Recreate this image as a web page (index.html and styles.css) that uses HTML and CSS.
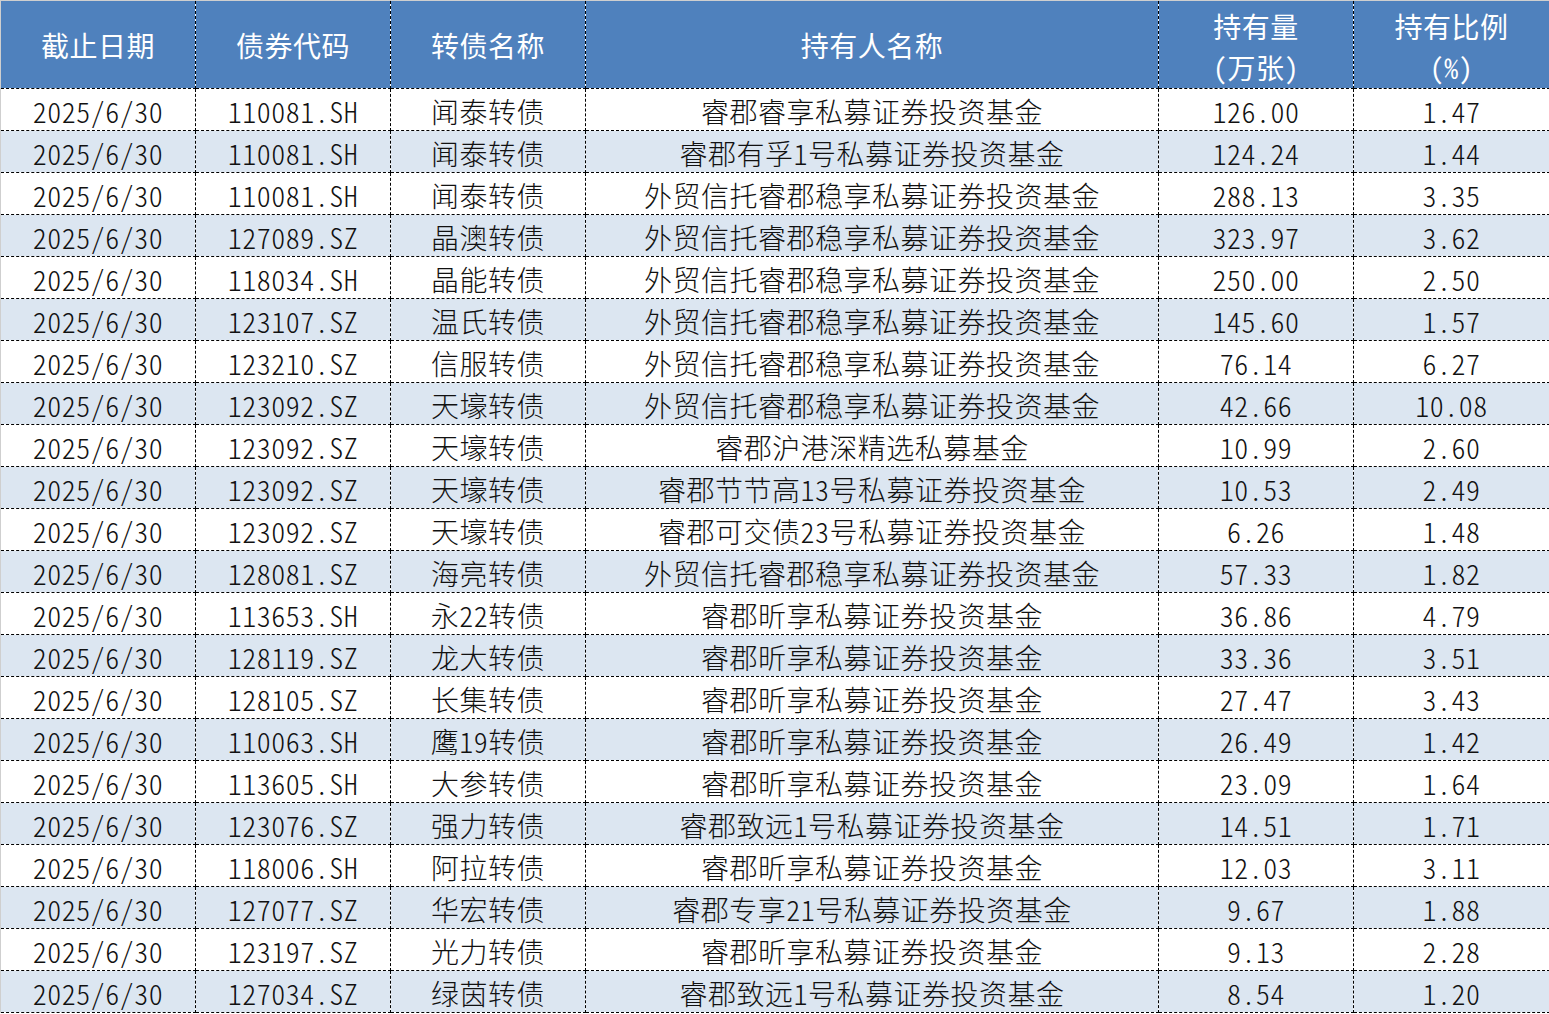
FILE: index.html
```html
<!DOCTYPE html>
<html lang="zh-CN">
<head>
<meta charset="utf-8">
<title>可转债持有人</title>
<link rel="stylesheet" href="styles.css">
</head>
<body>
<table class="sheet">
  <colgroup>
    <col class="c-date"><col class="c-code"><col class="c-name"><col class="c-holder"><col class="c-qty"><col class="c-pct">
  </colgroup>
  <thead>
    <tr class="head">
      <th>截止日期</th>
      <th>债券代码</th>
      <th>转债名称</th>
      <th>持有人名称</th>
      <th class="stack"><span class="line">持有量</span><span class="line">（万张）</span></th>
      <th class="stack"><span class="line">持有比例</span><span class="line">(%)</span></th>
    </tr>
  </thead>
  <tbody>
    <tr><td>2025/6/30</td><td>110081.SH</td><td>闻泰转债</td><td>睿郡睿享私募证券投资基金</td><td>126.00</td><td>1.47</td></tr>
    <tr class="alt"><td>2025/6/30</td><td>110081.SH</td><td>闻泰转债</td><td>睿郡有孚1号私募证券投资基金</td><td>124.24</td><td>1.44</td></tr>
    <tr><td>2025/6/30</td><td>110081.SH</td><td>闻泰转债</td><td>外贸信托睿郡稳享私募证券投资基金</td><td>288.13</td><td>3.35</td></tr>
    <tr class="alt"><td>2025/6/30</td><td>127089.SZ</td><td>晶澳转债</td><td>外贸信托睿郡稳享私募证券投资基金</td><td>323.97</td><td>3.62</td></tr>
    <tr><td>2025/6/30</td><td>118034.SH</td><td>晶能转债</td><td>外贸信托睿郡稳享私募证券投资基金</td><td>250.00</td><td>2.50</td></tr>
    <tr class="alt"><td>2025/6/30</td><td>123107.SZ</td><td>温氏转债</td><td>外贸信托睿郡稳享私募证券投资基金</td><td>145.60</td><td>1.57</td></tr>
    <tr><td>2025/6/30</td><td>123210.SZ</td><td>信服转债</td><td>外贸信托睿郡稳享私募证券投资基金</td><td>76.14</td><td>6.27</td></tr>
    <tr class="alt"><td>2025/6/30</td><td>123092.SZ</td><td>天壕转债</td><td>外贸信托睿郡稳享私募证券投资基金</td><td>42.66</td><td>10.08</td></tr>
    <tr><td>2025/6/30</td><td>123092.SZ</td><td>天壕转债</td><td>睿郡沪港深精选私募基金</td><td>10.99</td><td>2.60</td></tr>
    <tr class="alt"><td>2025/6/30</td><td>123092.SZ</td><td>天壕转债</td><td>睿郡节节高13号私募证券投资基金</td><td>10.53</td><td>2.49</td></tr>
    <tr><td>2025/6/30</td><td>123092.SZ</td><td>天壕转债</td><td>睿郡可交债23号私募证券投资基金</td><td>6.26</td><td>1.48</td></tr>
    <tr class="alt"><td>2025/6/30</td><td>128081.SZ</td><td>海亮转债</td><td>外贸信托睿郡稳享私募证券投资基金</td><td>57.33</td><td>1.82</td></tr>
    <tr><td>2025/6/30</td><td>113653.SH</td><td>永22转债</td><td>睿郡昕享私募证券投资基金</td><td>36.86</td><td>4.79</td></tr>
    <tr class="alt"><td>2025/6/30</td><td>128119.SZ</td><td>龙大转债</td><td>睿郡昕享私募证券投资基金</td><td>33.36</td><td>3.51</td></tr>
    <tr><td>2025/6/30</td><td>128105.SZ</td><td>长集转债</td><td>睿郡昕享私募证券投资基金</td><td>27.47</td><td>3.43</td></tr>
    <tr class="alt"><td>2025/6/30</td><td>110063.SH</td><td>鹰19转债</td><td>睿郡昕享私募证券投资基金</td><td>26.49</td><td>1.42</td></tr>
    <tr><td>2025/6/30</td><td>113605.SH</td><td>大参转债</td><td>睿郡昕享私募证券投资基金</td><td>23.09</td><td>1.64</td></tr>
    <tr class="alt"><td>2025/6/30</td><td>123076.SZ</td><td>强力转债</td><td>睿郡致远1号私募证券投资基金</td><td>14.51</td><td>1.71</td></tr>
    <tr><td>2025/6/30</td><td>118006.SH</td><td>阿拉转债</td><td>睿郡昕享私募证券投资基金</td><td>12.03</td><td>3.11</td></tr>
    <tr class="alt"><td>2025/6/30</td><td>127077.SZ</td><td>华宏转债</td><td>睿郡专享21号私募证券投资基金</td><td>9.67</td><td>1.88</td></tr>
    <tr><td>2025/6/30</td><td>123197.SZ</td><td>光力转债</td><td>睿郡昕享私募证券投资基金</td><td>9.13</td><td>2.28</td></tr>
    <tr class="alt"><td>2025/6/30</td><td>127034.SZ</td><td>绿茵转债</td><td>睿郡致远1号私募证券投资基金</td><td>8.54</td><td>1.20</td></tr>
  </tbody>
</table>
</body>
</html>
```

FILE: styles.css
```css
html, body {
  margin: 0;
  padding: 0;
  background: #ffffff;
}

.sheet {
  width: 1549px;
  table-layout: fixed;
  border-collapse: collapse;
  font-family: "Noto Sans CJK SC", "Noto Sans", sans-serif;
  font-feature-settings: "hwid" 1;
  font-size: 28px;
  font-weight: 300;
  color: #111111;
  border-top: 1px solid #cfcfcf;
  border-left: 1px solid #cfcfcf;
}

.c-date, .c-code, .c-name, .c-qty { width: 195px; }
.c-holder { width: 573px; }
.c-pct { width: 196px; }

.sheet th,
.sheet td {
  border-right: 1px dashed #000000;
  border-bottom: 1px dashed #000000;
  text-align: center;
  vertical-align: middle;
  padding: 0;
  white-space: nowrap;
  overflow: hidden;
  letter-spacing: 0.5px;
}

.head {
  height: 88px;
  background: #4f81bd;
}

.head th {
  color: #ffffff;
  font-weight: 400;
  font-size: 28px;
  line-height: 34px;
  border-top: 1px solid #cfcfcf;
}

.head th.stack {
  padding-top: 5px;
}

.line {
  display: block;
  height: 41px;
  line-height: 41px;
}

.sheet tbody tr {
  height: 42px;
}

.sheet td {
  height: 41px;
  line-height: 38px;
  padding-top: 3px;
  box-sizing: border-box;
}

.alt {
  background: #dce6f1;
}
```
